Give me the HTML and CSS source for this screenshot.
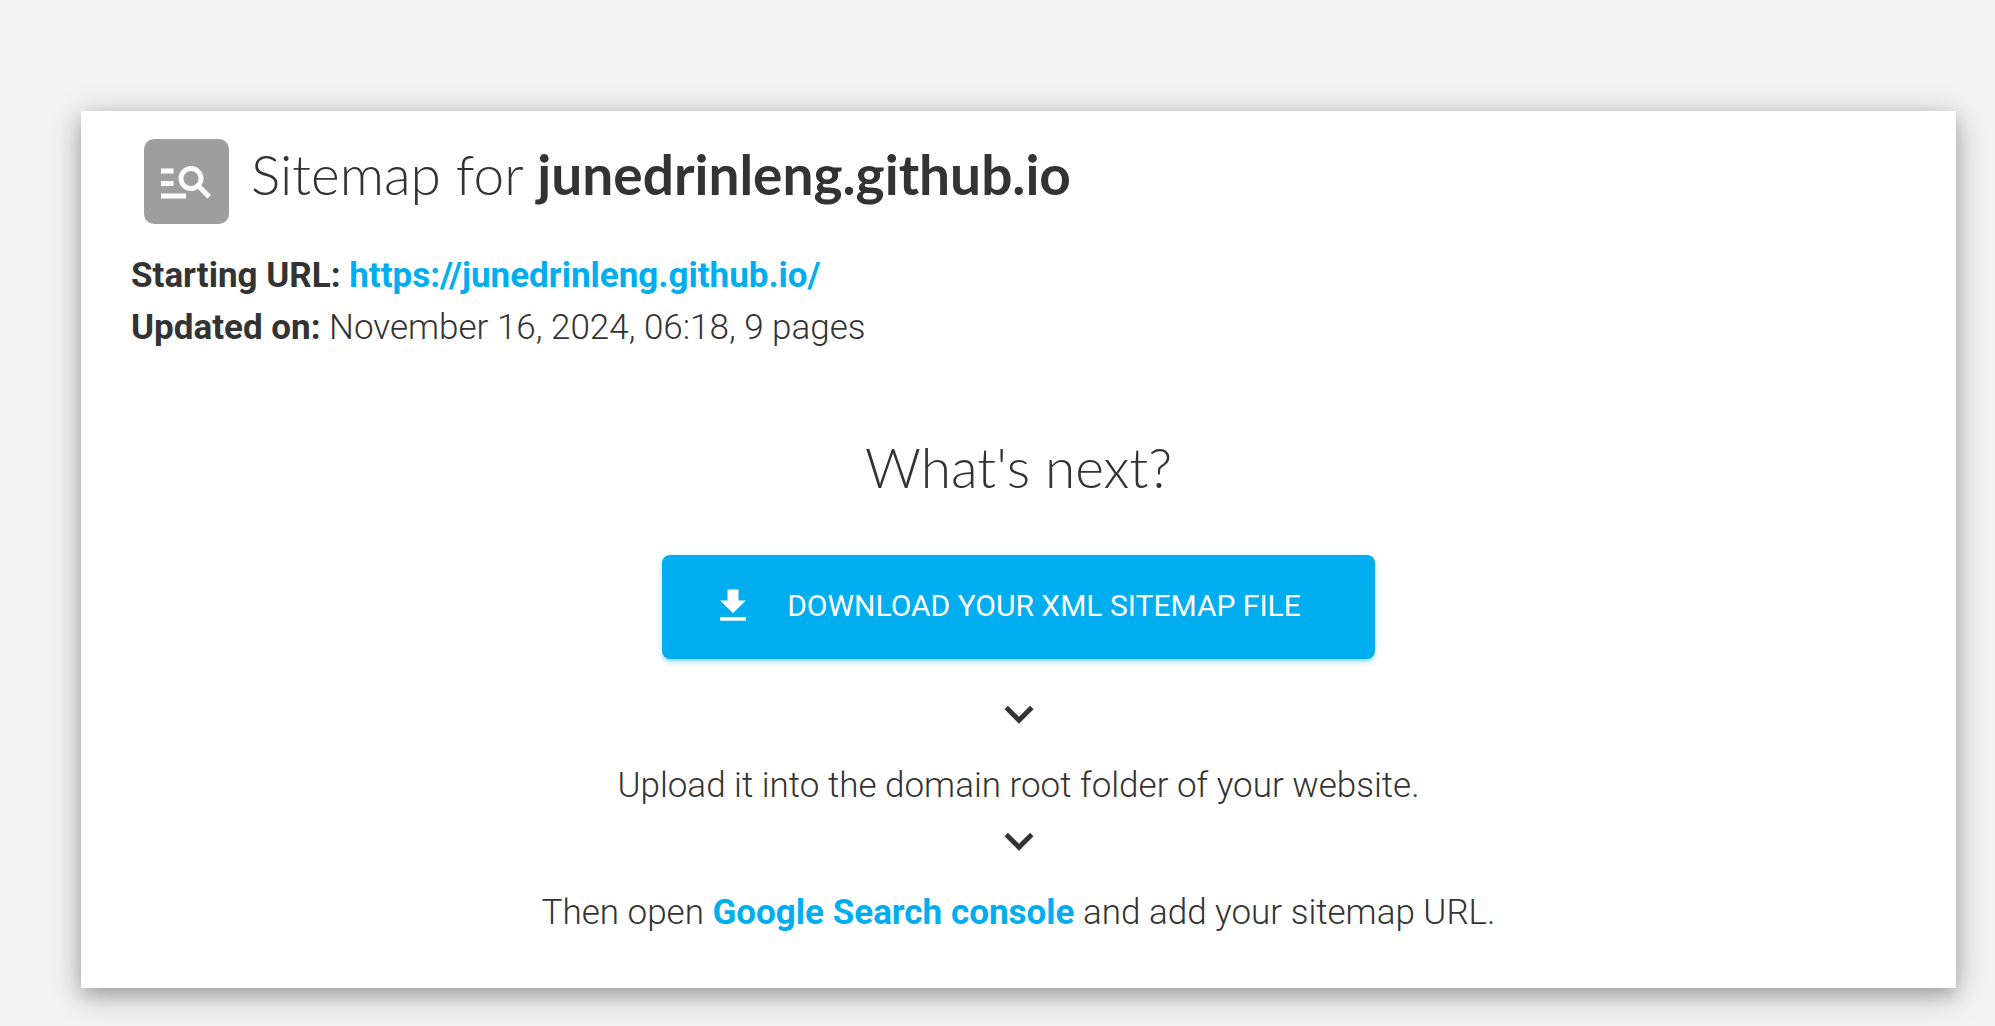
FILE: index.html
```html
<!DOCTYPE html>
<html lang="en">
<head>
<meta charset="utf-8">
<meta name="viewport" content="width=device-width, initial-scale=1">
<title>Sitemap for junedrinleng.github.io</title>
<link rel="stylesheet" href="styles.css">
</head>
<body>
<main class="card">
  <header class="card-header">
    <span class="badge">
      <svg class="badge-icon" viewBox="0 0 24 24" aria-hidden="true"><path d="M7 9H2V7h5v2zm0 3H2v2h5v-2zm13.59 7l-3.83-3.83c-.8.52-1.74.83-2.76.83-2.76 0-5-2.24-5-5s2.24-5 5-5 5 2.240 5 5c0 1.020-.31 1.960-.83 2.750L22 17.590 20.590 19zM17 11c0-1.650-1.350-3-3-3s-3 1.350-3 3 1.350 3 3 3 3-1.350 3-3zM2 19h10v-2H2v2z"/></svg>
    </span>
    <h1 class="title">Sitemap for <strong>junedrinleng.github.io</strong></h1>
  </header>
  <section class="details">
    <p><strong>Starting URL: <a href="https://junedrinleng.github.io/">https://junedrinleng.github.io/</a></strong></p>
    <p><strong>Updated on:</strong> November 16, 2024, 06:18, 9 pages</p>
  </section>
  <section class="next">
    <h2 class="title">What's next?</h2>
    <button class="download" type="button">
      <svg class="download-icon" viewBox="0 0 24 24" aria-hidden="true"><path d="M19 9h-4V3H9v6H5l7 7 7-7zM5 18v2h14v-2H5z"/></svg>
      Download your XML sitemap file
    </button>
    <svg class="chevron" viewBox="0 0 24 24" aria-hidden="true"><path d="M7.410 8.590L12 13.170l4.590-4.580L18 10l-6 6-6-6z"/></svg>
    <p>Upload it into the domain root folder of your website.</p>
    <svg class="chevron" viewBox="0 0 24 24" aria-hidden="true"><path d="M7.410 8.590L12 13.170l4.590-4.580L18 10l-6 6-6-6z"/></svg>
    <p>Then open <a href="https://search.google.com/search-console">Google Search console</a> and add your sitemap URL.</p>
  </section>
</main>
</body>
</html>
```
FILE: styles.css
```css
* { box-sizing: border-box; }
body {
  margin: 0;
  padding: 111px 39px 37px 81px;
  background: #f3f3f3;
  color: #333;
  font: 300 35px/52px Roboto, "Liberation Sans", sans-serif;
}
h1, h2, p { margin: 0; }
svg { display: block; fill: currentColor; }
a { color: #00aef0; font-weight: 700; text-decoration: none; }
strong { font-weight: 700; }
.card {
  padding: 28px 50px 49px;
  background: #fff;
  box-shadow: 0 7px 18px rgba(0, 0, 0, .24), 0 7px 35px rgba(0, 0, 0, .19);
}
.card-header { display: flex; gap: 22px; padding-left: 13px; }
.badge {
  display: grid;
  place-items: center;
  width: 85px;
  height: 85px;
  padding: 0 2px 2px 0;
  border-radius: 10px;
  background: #9e9e9e;
  color: #fff;
}
.badge-icon { width: 60px; height: 60px; }
.title { font: 300 55px/70px Lato, "Open Sans", sans-serif; }
.title strong { font-weight: 700; }
.details { padding-top: 26px; }
.next {
  display: flex;
  flex-direction: column;
  align-items: center;
  padding-top: 78px;
  text-align: center;
}
.download {
  display: flex;
  align-items: center;
  gap: 32px;
  height: 104px;
  margin: 53px 0 26px;
  padding: 0 74px 3px 49px;
  border: 0;
  border-radius: 8px;
  background: #00aef0;
  box-shadow: 0 4px 4px rgba(0, 174, 240, .14), 0 5px 2px -3px rgba(0, 174, 240, .2), 0 2px 9px rgba(0, 174, 240, .2);
  color: #fff;
  font: 400 30px/44px Roboto, "Liberation Sans", sans-serif;
  text-transform: uppercase;
}
.download-icon { width: 44px; height: 44px; }
.chevron { width: 58px; height: 58px; margin-bottom: 17px; }
```
